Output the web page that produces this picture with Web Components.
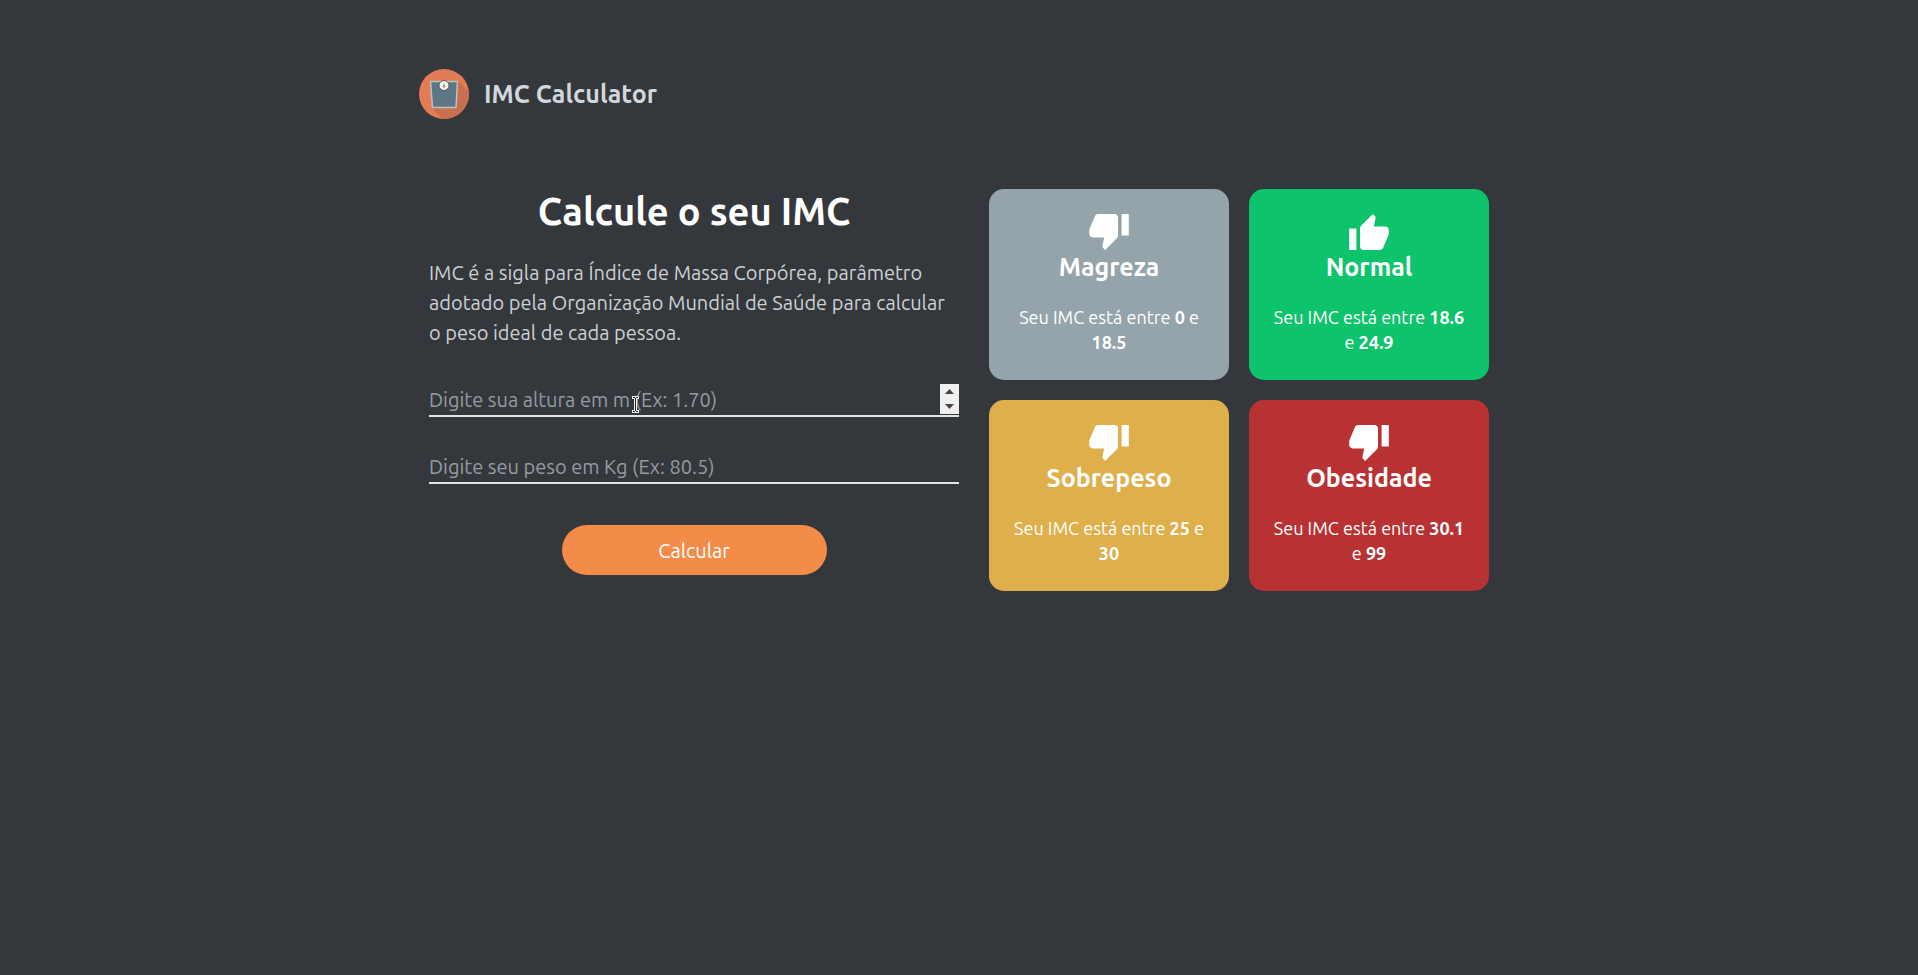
<!DOCTYPE html>
<html lang="pt-BR">
<head>
<meta charset="utf-8">
<meta name="viewport" content="width=device-width, initial-scale=1">
<title>IMC Calculator</title>
<style>
  body {
    margin: 0;
    background: #34373b;
    color: #fff;
    font-family: Ubuntu, "Noto Sans", sans-serif;
    font-size: 20px;
  }
</style>
</head>
<body>
<imc-app></imc-app>

<script>
const define = (name, html, setup) => {
  const template = document.createElement('template');
  template.innerHTML = html;
  customElements.define(name, class extends HTMLElement {
    connectedCallback() {
      if (this.shadowRoot) return;
      this.attachShadow({ mode: 'open' }).append(template.content.cloneNode(true));
      if (setup) setup(this, this.shadowRoot);
    }
  });
};

/* Header: round scale logo and the site name */
define('imc-header', `
<style>
  :host { display: block; }
  header { display: flex; align-items: center; gap: 15px; }
  svg { display: block; width: 50px; height: 50px; flex: none; }
  span { font-size: 25px; font-weight: 700; line-height: 34px; color: #d1d7dc; }
</style>
<header>
  <svg viewBox="0 0 50 50" aria-hidden="true">
    <defs><clipPath id="disc"><circle cx="25" cy="25" r="25"/></clipPath></defs>
    <g clip-path="url(#disc)">
      <rect width="50" height="50" fill="#e27c55"/>
      <path d="M39 12 60 33V60H34L13 39z" fill="#c96f4e"/>
    </g>
    <path d="M11.500 12.500H38.500L37 38.500H13.500z" fill="#5d7789" stroke="#bfc3bd" stroke-width="1.500" stroke-linejoin="round"/>
    <circle cx="25" cy="16.500" r="5" fill="#f5f3f0" stroke="#4a5a66" stroke-width="1"/>
    <path d="M25 13.500 26.500 18.500H23.500z" fill="#c98272"/>
  </svg>
  <span>IMC Calculator</span>
</header>`);

/* Underlined number box; the "stepper" attribute shows the up and down buttons */
define('imc-field', `
<style>
  :host { display: block; position: relative; }
  input {
    display: block; box-sizing: border-box; width: 100%; height: 36px;
    margin: 0; padding: 2px 0 0; border: 0; border-bottom: 2px solid #dfe6e9;
    background: none; outline: none; color: #fff;
    font: inherit; font-size: 20px; appearance: textfield;
  }
  input::placeholder { color: #949ca3; opacity: 1; }
  input::-webkit-inner-spin-button { appearance: none; margin: 0; }
  .stepper {
    display: none; position: absolute; right: 0; top: 3px;
    width: 19px; height: 30px; background: #f1eff0;
  }
  :host([stepper]) .stepper { display: grid; grid-template-rows: 1fr 1fr; }
  button {
    display: grid; place-items: center; margin: 0; padding: 0;
    border: 0; background: none; color: #454545;
  }
  svg { display: block; width: 9px; height: 5px; fill: currentColor; }
</style>
<input type="number" step="any">
<div class="stepper">
  <button type="button" tabindex="-1" aria-label="Aumentar"><svg viewBox="0 0 9 5"><path d="M0 5 4.500 0 9 5z"/></svg></button>
  <button type="button" tabindex="-1" aria-label="Diminuir"><svg viewBox="0 0 9 5"><path d="M0 0H9L4.500 5z"/></svg></button>
</div>
<slot></slot>`, (host, root) => {
  const input = root.querySelector('input');
  input.placeholder = host.getAttribute('label');
  input.setAttribute('aria-label', host.getAttribute('label'));
  const [up, down] = root.querySelectorAll('button');
  const step = d => { input.value = (Number(input.value) + d).toFixed(2); };
  up.onclick = () => step(0.01);
  down.onclick = () => step(-0.01);
});

/* Text pointer resting over the height field */
define('text-pointer', `
<style>
  :host { display: block; position: absolute; left: 203px; top: 15px; pointer-events: none; }
  svg { display: block; width: 7px; height: 17px; }
</style>
<svg viewBox="0 0 7 17" aria-hidden="true">
  <path d="M0 0H7V3H5V14H7V17H0V14H2V3H0z" fill="#f4f4f4"/>
  <path d="M1 1H3V2H4V1H6V2H4V15H6V16H4V15H3V16H1V15H3V2H1z" fill="#222"/>
</svg>`);

define('imc-form', `
<style>
  :host { display: block; }
  h1 { margin: 0 0 25px; font-size: 38px; line-height: 44px; text-align: center; }
  p { margin: 0 0 33px; font-size: 20px; line-height: 30px; color: #cbd1d6; }
  form { display: grid; gap: 31px; }
  button {
    justify-self: center; width: 50%; height: 50px; margin-top: 10px; padding: 0;
    border: 0; border-radius: 25px; background: #f48c49; color: #fff;
    font: inherit; font-size: 20px; cursor: pointer;
  }
</style>
<h1>Calcule o seu IMC</h1>
<p>IMC é a sigla para Índice de Massa Corpórea, parâmetro adotado pela Organização Mundial de Saúde para calcular o peso ideal de cada pessoa.</p>
<form>
  <imc-field label="Digite sua altura em m (Ex: 1.70)" stepper><text-pointer></text-pointer></imc-field>
  <imc-field label="Digite seu peso em Kg (Ex: 80.5)"></imc-field>
  <button type="button">Calcular</button>
</form>`);

/* Result card: colour and thumb come from the "level" and "thumb" attributes */
define('imc-card', `
<style>
  :host { display: block; }
  article {
    box-sizing: border-box; height: 100%; padding: 25px 20px;
    border-radius: 15px; background: #95a3aa; text-align: center;
  }
  :host([level="normal"]) article { background: #0dc36b; }
  :host([level="over"]) article { background: #deaf4b; }
  :host([level="obese"]) article { background: #b83233; }
  svg { display: none; width: 40px; height: 36px; margin: 0 auto; fill: #fff; }
  :host([thumb="down"]) .down, :host([thumb="up"]) .up { display: block; }
  h2 { margin: 0 0 21px; font-size: 25px; line-height: 34px; }
  p { margin: 0; font-size: 18px; line-height: 25px; }
</style>
<article>
  <svg class="down" viewBox="1 3 22 20" aria-hidden="true"><path d="M15 3H6c-.83 0-1.540.5-1.840 1.220l-3.020 7.050c-.09.23-.14.47-.14.73v2c0 1.100.9 2 2 2h6.310l-.95 4.570-.03.32c0 .41.17.79.44 1.060L9.830 23l6.590-6.590c.36-.36.58-.86.58-1.410V5c0-1.100-.9-2-2-2zm4 0v12h4V3h-4z"/></svg>
  <svg class="up" viewBox="1 1 22 20" aria-hidden="true"><path d="M1 21h4V9H1v12zm22-11c0-1.100-.9-2-2-2h-6.310l.95-4.570.03-.32c0-.41-.17-.79-.44-1.060L14.170 1 7.590 7.590C7.220 7.950 7 8.450 7 9v10c0 1.100.9 2 2 2h9c.83 0 1.540-.5 1.840-1.220l3.020-7.050c.09-.23.14-.47.14-.73v-2z"/></svg>
  <h2><slot name="title"></slot></h2>
  <p><slot></slot></p>
</article>`);

define('imc-app', `
<style>
  :host { display: block; max-width: 1080px; margin: 0 auto; padding: 69px 0 40px; }
  main {
    display: grid; grid-template-columns: minmax(0, 1fr) 500px; gap: 30px;
    align-items: start; margin-top: 70px; padding: 0 10px;
  }
  section { display: grid; grid-template-columns: 1fr 1fr; gap: 20px; }
  @media (max-width: 1000px) {
    main { grid-template-columns: minmax(0, 1fr); }
  }
</style>
<imc-header></imc-header>
<main>
  <imc-form></imc-form>
  <section>
    <imc-card level="thin" thumb="down"><span slot="title">Magreza</span>Seu IMC está entre <b>0</b> e <b>18.5</b></imc-card>
    <imc-card level="normal" thumb="up"><span slot="title">Normal</span>Seu IMC está entre <b>18.6</b> e <b>24.9</b></imc-card>
    <imc-card level="over" thumb="down"><span slot="title">Sobrepeso</span>Seu IMC está entre <b>25</b> e <b>30</b></imc-card>
    <imc-card level="obese" thumb="down"><span slot="title">Obesidade</span>Seu IMC está entre <b>30.1</b> e <b>99</b></imc-card>
  </section>
</main>`);
</script>
</body>
</html>
